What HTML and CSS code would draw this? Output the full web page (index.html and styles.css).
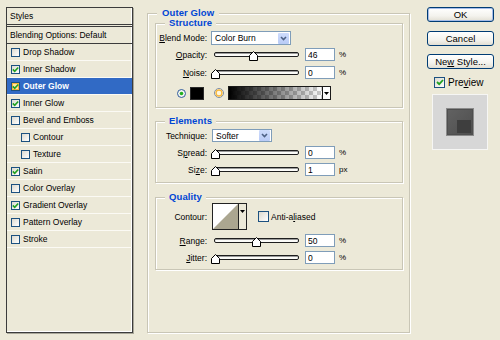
FILE: index.html
```html
<!DOCTYPE html>
<html>
<head>
    <meta charset="UTF-8">
    <link rel="stylesheet" href="styles.css">
</head>
<body>
    <div class="dialog">
        <!-- left: list of layer effects -->
        <div class="style-list">
            <div class="list-head">Styles</div>
            <div class="list-blend">Blending Options: Default</div>
            <div class="list-item"><span class="cb"></span>Drop Shadow</div>
            <div class="list-item"><span class="cb"><svg width="7" height="7" viewBox="0 0 7 7"><path d="M0.8 3.4 L2.7 5.3 L6.2 1.5" fill="none" stroke="#21a121" stroke-width="1.6"/></svg></span>Inner Shadow</div>
            <div class="list-item selected"><span class="cb hot"><svg width="7" height="7" viewBox="0 0 7 7"><path d="M0.8 3.4 L2.7 5.3 L6.2 1.5" fill="none" stroke="#21a121" stroke-width="1.6"/></svg></span>Outer Glow</div>
            <div class="list-item"><span class="cb"><svg width="7" height="7" viewBox="0 0 7 7"><path d="M0.8 3.4 L2.7 5.3 L6.2 1.5" fill="none" stroke="#21a121" stroke-width="1.6"/></svg></span>Inner Glow</div>
            <div class="list-item"><span class="cb"></span>Bevel and Emboss</div>
            <div class="list-item sub"><span class="cb"></span>Contour</div>
            <div class="list-item sub"><span class="cb"></span>Texture</div>
            <div class="list-item"><span class="cb"><svg width="7" height="7" viewBox="0 0 7 7"><path d="M0.8 3.4 L2.7 5.3 L6.2 1.5" fill="none" stroke="#21a121" stroke-width="1.6"/></svg></span>Satin</div>
            <div class="list-item"><span class="cb"></span>Color Overlay</div>
            <div class="list-item"><span class="cb"><svg width="7" height="7" viewBox="0 0 7 7"><path d="M0.8 3.4 L2.7 5.3 L6.2 1.5" fill="none" stroke="#21a121" stroke-width="1.6"/></svg></span>Gradient Overlay</div>
            <div class="list-item"><span class="cb"></span>Pattern Overlay</div>
            <div class="list-item"><span class="cb"></span>Stroke</div>
        </div>

        <!-- middle: settings -->
        <div class="main">
            <div class="group outer">
                <div class="group-title">Outer Glow</div>

                <div class="group inner structure">
                    <div class="group-title">Structure</div>
                    <div class="row row-blend">
                        <span class="lbl"><u>B</u>lend Mode:</span>
                        <div class="select select-blend">
                            <span class="select-text">Color Burn</span>
                            <span class="select-btn"><svg width="9" height="9" viewBox="0 0 9 9"><path d="M2 3 L4.5 5.5 L7 3" fill="none" stroke="#4d6185" stroke-width="1.6"/></svg></span>
                        </div>
                    </div>
                    <div class="row row-opacity">
                        <span class="lbl"><u>O</u>pacity:</span>
                        <div class="slider">
                            <div class="track"></div>
                            <svg class="thumb" style="left: 35px" width="9" height="10" viewBox="0 0 9 10"><path d="M0.5 9.5 V4.5 L4.5 0.5 L8.5 4.5 V9.5 Z" fill="#fff" stroke="#000"/></svg>
                        </div>
                        <input class="num" type="text" value="46">
                        <span class="unit">%</span>
                    </div>
                    <div class="row row-noise">
                        <span class="lbl"><u>N</u>oise:</span>
                        <div class="slider">
                            <div class="track"></div>
                            <svg class="thumb" style="left: -3px" width="9" height="10" viewBox="0 0 9 10"><path d="M0.5 9.5 V4.5 L4.5 0.5 L8.5 4.5 V9.5 Z" fill="#fff" stroke="#000"/></svg>
                        </div>
                        <input class="num" type="text" value="0">
                        <span class="unit">%</span>
                    </div>
                    <div class="row row-color">
                        <svg class="radio" width="9" height="9" viewBox="0 0 9 9"><circle cx="4.5" cy="4.5" r="4" fill="#f4f4f0" stroke="#2f5a9a"/><circle cx="4.5" cy="4.5" r="1.8" fill="#22b022"/></svg>
                        <span class="swatch"></span>
                        <svg class="radio2" width="10" height="10" viewBox="0 0 10 10"><circle cx="5" cy="5" r="4.5" fill="#fff" stroke="#7b8da5"/><circle cx="5" cy="5" r="3" fill="#fff6dc" stroke="#f6b73c" stroke-width="1.4"/></svg>
                        <div class="grad">
                            <span class="grad-fill"></span>
                            <span class="grad-btn"><svg width="5" height="3" viewBox="0 0 5 3"><path d="M0 0 H5 L2.5 3 Z" fill="#000"/></svg></span>
                        </div>
                    </div>
                </div>

                <div class="group inner elements">
                    <div class="group-title">Elements</div>
                    <div class="row row-technique">
                        <span class="lbl">Technique:</span>
                        <div class="select select-technique">
                            <span class="select-text">Softer</span>
                            <span class="select-btn"><svg width="9" height="9" viewBox="0 0 9 9"><path d="M2 3 L4.5 5.5 L7 3" fill="none" stroke="#4d6185" stroke-width="1.6"/></svg></span>
                        </div>
                    </div>
                    <div class="row row-spread">
                        <span class="lbl">S<u>p</u>read:</span>
                        <div class="slider">
                            <div class="track"></div>
                            <svg class="thumb" style="left: -3px" width="9" height="10" viewBox="0 0 9 10"><path d="M0.5 9.5 V4.5 L4.5 0.5 L8.5 4.5 V9.5 Z" fill="#fff" stroke="#000"/></svg>
                        </div>
                        <input class="num" type="text" value="0">
                        <span class="unit">%</span>
                    </div>
                    <div class="row row-size">
                        <span class="lbl">Si<u>z</u>e:</span>
                        <div class="slider">
                            <div class="track"></div>
                            <svg class="thumb" style="left: -3px" width="9" height="10" viewBox="0 0 9 10"><path d="M0.5 9.5 V4.5 L4.5 0.5 L8.5 4.5 V9.5 Z" fill="#fff" stroke="#000"/></svg>
                        </div>
                        <input class="num" type="text" value="1">
                        <span class="unit">px</span>
                    </div>
                </div>

                <div class="group inner quality">
                    <div class="group-title">Quality</div>
                    <div class="row row-contour">
                        <span class="lbl">Contour:</span>
                        <div class="contour">
                            <svg class="contour-curve" width="25" height="25" viewBox="0 0 25 25"><rect width="25" height="25" fill="#fff"/><path d="M0 25 L25 0 V25 Z" fill="#aba690"/></svg>
                            <span class="contour-btn"><svg width="5" height="3" viewBox="0 0 5 3"><path d="M0 0 H5 L2.5 3 Z" fill="#000"/></svg></span>
                        </div>
                        <span class="cb big"></span>
                        <span class="cb-label">Anti-a<u>l</u>iased</span>
                    </div>
                    <div class="row row-range">
                        <span class="lbl"><u>R</u>ange:</span>
                        <div class="slider">
                            <div class="track"></div>
                            <svg class="thumb" style="left: 38px" width="9" height="10" viewBox="0 0 9 10"><path d="M0.5 9.5 V4.5 L4.5 0.5 L8.5 4.5 V9.5 Z" fill="#fff" stroke="#000"/></svg>
                        </div>
                        <input class="num" type="text" value="50">
                        <span class="unit">%</span>
                    </div>
                    <div class="row row-jitter">
                        <span class="lbl"><u>J</u>itter:</span>
                        <div class="slider">
                            <div class="track"></div>
                            <svg class="thumb" style="left: -3px" width="9" height="10" viewBox="0 0 9 10"><path d="M0.5 9.5 V4.5 L4.5 0.5 L8.5 4.5 V9.5 Z" fill="#fff" stroke="#000"/></svg>
                        </div>
                        <input class="num" type="text" value="0">
                        <span class="unit">%</span>
                    </div>
                </div>
            </div>
        </div>

        <!-- right: buttons and preview -->
        <div class="side">
            <button class="btn default">OK</button>
            <button class="btn btn-cancel">Cancel</button>
            <button class="btn btn-new">Ne<u>w</u> Style...</button>
            <div class="preview-row">
                <span class="cb big"><svg width="8" height="8" viewBox="0 0 8 8"><path d="M1 4 L3.2 6.2 L7 2" fill="none" stroke="#21a121" stroke-width="1.8"/></svg></span>
                <span>Pre<u>v</u>iew</span>
            </div>
            <div class="preview-box">
                <div class="preview-square"></div>
            </div>
        </div>
    </div>
</body>
</html>
```

FILE: styles.css
```css
body {
    margin: 0;
    background: #ece9d8;
    font-family: "Liberation Sans", Arial, sans-serif;
    font-size: 8.5px;
    color: #000;
}

.dialog {
    display: flex;
    align-items: flex-start;
    box-sizing: border-box;
    height: 340px;
    padding: 7px 0 0 6px;
}

/* effect list */
.style-list {
    flex: none;
    box-sizing: border-box;
    width: 127px;
    height: 326px;
    border: 1px solid #3c3c3c;
    box-shadow: inset -1px -1px 0 #fff, 1px 1px 0 #a9a799;
}

.list-head {
    height: 16px;
    line-height: 16px;
    padding-left: 3px;
    border-bottom: 3px double #3c3c3c;
}

.list-blend {
    height: 16px;
    line-height: 16px;
    padding-left: 3px;
    border-bottom: 1px solid #3c3c3c;
}

.list-item {
    display: flex;
    align-items: center;
    height: 16px;
    padding-left: 4px;
    border-bottom: 1px solid #fbfaf4;
}
.list-item.sub {
    padding-left: 14px;
}
.list-item.selected {
    background: #316ac5;
    color: #fff;
    font-weight: bold;
}

.cb {
    flex: none;
    display: flex;
    align-items: center;
    justify-content: center;
    box-sizing: border-box;
    width: 9px;
    height: 9px;
    margin-right: 3px;
    border: 1px solid #1c5180;
    background: linear-gradient(135deg, #dcdad0, #fff);
}
.cb.hot {
    background: #fde7a6;
    box-shadow: inset 0 0 0 1px #f8b636;
}
.cb.big {
    width: 11px;
    height: 11px;
}

/* group boxes */
.main {
    flex: none;
    margin: 6px 0 0 14px;
}

.group {
    box-sizing: border-box;
    border: 1px solid #c9c6b6;
    box-shadow: inset 1px 1px 0 #fff, 1px 1px 0 #fff;
}
.group.outer {
    width: 263px;
    height: 320px;
}
.group.inner {
    width: 248px;
    margin-left: 7px;
}
.structure {
    margin-top: 4px;
    padding-bottom: 7px;
}
.elements {
    margin-top: 13px;
    padding-bottom: 6px;
}
.quality {
    margin-top: 14px;
    padding-bottom: 5px;
}

.group-title {
    width: max-content;
    height: 12px;
    line-height: 12px;
    margin: -7px 0 0 9px;
    padding: 0 5px;
    background: #ece9d8;
    color: #0046d5;
    font-size: 9.5px;
    font-weight: bold;
    letter-spacing: 0.1px;
}
.inner .group-title {
    padding: 0 4px;
}

.row {
    display: flex;
    align-items: center;
    height: 13px;
    margin-top: 4px;
}
.row-blend { height: 14px; margin-top: 2px; }
.row-opacity { margin-top: 3px; }
.row-noise { margin-top: 5px; }
.row-color { height: 14px; margin-top: 7px; }
.row-technique { margin-top: 2px; }
.row-contour { height: 27px; margin-top: 0; }

.lbl {
    flex: none;
    width: 51px;
    text-align: right;
    white-space: nowrap;
}

/* dropdowns */
.select {
    display: flex;
    align-items: center;
    box-sizing: border-box;
    height: 100%;
    border: 1px solid #7f9db9;
    background: #fff;
}
.select-blend {
    width: 80px;
    margin-left: 4px;
}
.select-technique {
    width: 60px;
    margin-left: 5px;
}
.select-text {
    flex: 1;
    padding-left: 3px;
}
.select-btn {
    display: flex;
    align-items: center;
    justify-content: center;
    width: 11px;
    height: 11px;
    margin-right: 1px;
    border-radius: 1px;
    background: linear-gradient(#cedcfc, #b9cbf6);
}

/* sliders */
.slider {
    position: relative;
    flex: none;
    width: 85px;
    height: 13px;
    margin-left: 7px;
}
.track {
    box-sizing: border-box;
    height: 5px;
    margin-top: 4px;
    border: 1px solid #1e1e1e;
    border-radius: 2px;
    background: #fbfbf8;
    box-shadow: inset 0 1px 0 #9a9a9a;
}
.thumb {
    position: absolute;
    top: 3px;
}

.num {
    box-sizing: border-box;
    width: 30px;
    height: 13px;
    margin: 0 0 0 6px;
    padding: 0 2px;
    border: 1px solid #7f9db9;
    background: #fff;
    font-family: inherit;
    font-size: 8.5px;
    color: #000;
    outline: none;
}
.unit {
    margin-left: 4px;
    font-size: 8px;
}

/* colour row */
.radio {
    margin-left: 21px;
}
.swatch {
    box-sizing: border-box;
    width: 14px;
    height: 13px;
    margin-left: 4px;
    border: 1px solid #2a2a2a;
    background: #000;
}
.radio2 {
    margin-left: 10px;
}
.grad {
    display: flex;
    box-sizing: border-box;
    width: 103px;
    height: 14px;
    margin-left: 4px;
    border: 1px solid #1a1a1a;
}
.grad-fill {
    flex: 1;
    background:
        linear-gradient(to right, #000, rgba(0, 0, 0, 0)),
        repeating-conic-gradient(#cbcbcb 0 25%, #fff 0 50%) 0 0 / 8px 8px;
}
.grad-btn {
    display: flex;
    align-items: center;
    justify-content: center;
    width: 7px;
    border-left: 1px solid #1a1a1a;
    background: #fff;
}

/* contour picker */
.contour {
    display: flex;
    box-sizing: border-box;
    width: 35px;
    height: 27px;
    margin-left: 5px;
    border: 1px solid #222;
    background: #ece9d8;
}
.contour-btn {
    display: flex;
    justify-content: center;
    flex: 1;
    padding-top: 6px;
    border-left: 1px solid #222;
}
.row-contour .cb {
    margin-left: 11px;
    margin-right: 2px;
}

/* right column */
.side {
    flex: none;
    display: flex;
    flex-direction: column;
    width: 67px;
    margin-left: 17px;
}

.btn {
    box-sizing: border-box;
    height: 15px;
    padding: 0;
    border: 1px solid #003c74;
    border-radius: 3px;
    background: linear-gradient(#ffffff, #f4f3ee 60%, #e2dfd4);
    font-family: inherit;
    font-size: 9.5px;
    line-height: 13px;
    color: #000;
}
.btn.default {
    box-shadow: inset 0 0 0 1px #a6bde9;
}
.btn-cancel {
    margin-top: 9px;
}
.btn-new {
    margin-top: 8px;
}

.preview-row {
    display: flex;
    align-items: center;
    height: 12px;
    margin: 7px 0 0 7px;
    font-size: 10px;
}

.preview-box {
    display: flex;
    align-items: center;
    justify-content: center;
    box-sizing: border-box;
    width: 56px;
    height: 56px;
    margin: 6px 0 0 5px;
    border: 1px solid #f6f6f4;
    background: #d7d7d7;
}
.preview-square {
    box-sizing: border-box;
    width: 28px;
    height: 28px;
    border: 1px solid #8a8a8a;
    box-shadow: inset 0 0 0 1px #4f4f4f;
    background:
        linear-gradient(#3e3e3e, #3e3e3e) right 2px bottom 2px / 14px 13px no-repeat,
        linear-gradient(135deg, #626262, #4e4e4e);
}
```
